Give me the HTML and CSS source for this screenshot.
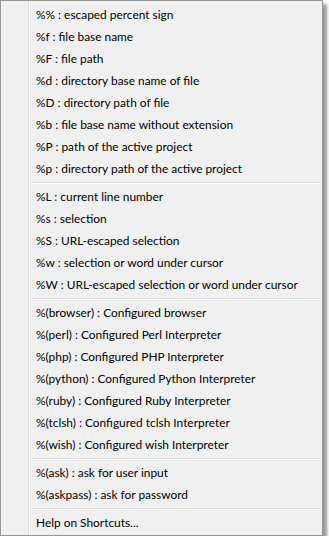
FILE: index.html
```html
<!DOCTYPE html>
<html lang="en">
<head>
    <meta charset="UTF-8">
    <title>Shortcuts Menu</title>
    <link rel="stylesheet" href="styles.css">
</head>
<body>
    <div class="menu">
        <div class="item">%% : escaped percent sign</div>
        <div class="item">%f : file base name</div>
        <div class="item">%F : file path</div>
        <div class="item">%d : directory base name of file</div>
        <div class="item">%D : directory path of file</div>
        <div class="item">%b : file base name without extension</div>
        <div class="item">%P : path of the active project</div>
        <div class="item">%p : directory path of the active project</div>
        <div class="sep"></div>
        <div class="item">%L : current line number</div>
        <div class="item">%s : selection</div>
        <div class="item">%S : URL-escaped selection</div>
        <div class="item">%w : selection or word under cursor</div>
        <div class="item">%W : URL-escaped selection or word under cursor</div>
        <div class="sep"></div>
        <div class="item">%(browser) : Configured browser</div>
        <div class="item">%(perl) : Configured Perl Interpreter</div>
        <div class="item">%(php) : Configured PHP Interpreter</div>
        <div class="item">%(python) : Configured Python Interpreter</div>
        <div class="item">%(ruby) : Configured Ruby Interpreter</div>
        <div class="item">%(tclsh) : Configured tclsh Interpreter</div>
        <div class="item">%(wish) : Configured wish Interpreter</div>
        <div class="sep"></div>
        <div class="item">%(ask) : ask for user input</div>
        <div class="item">%(askpass) : ask for password</div>
        <div class="sep"></div>
        <div class="item">Help on Shortcuts...</div>
    </div>
</body>
</html>
```

FILE: styles.css
```css
body {
    margin: 0;
    background: #ffffff;
    font-family: Lato, "Noto Sans", sans-serif;
    font-size: 11.9px;
}
.menu {
    box-sizing: border-box;
    width: 323px;
    padding: 3px 2px 1px 2px;
    border: 1px solid #979797;
    background-color: #f0f0f0;
    background-image: linear-gradient(to right, transparent 27px, #e2e3e3 27px, #e2e3e3 28px, #ffffff 28px, #ffffff 29px, transparent 29px);
    box-shadow: 4px 4px 3px rgba(0,0,0,0.4);
}
.item {
    height: 22px;
    line-height: 22px;
    padding-left: 33px;
    color: #000;
    white-space: nowrap;
}
.sep {
    height: 1px;
    margin: 2px 0 2px 28px;
    background: #e0e0e0;
    border-bottom: 1px solid #ffffff;
}
```
